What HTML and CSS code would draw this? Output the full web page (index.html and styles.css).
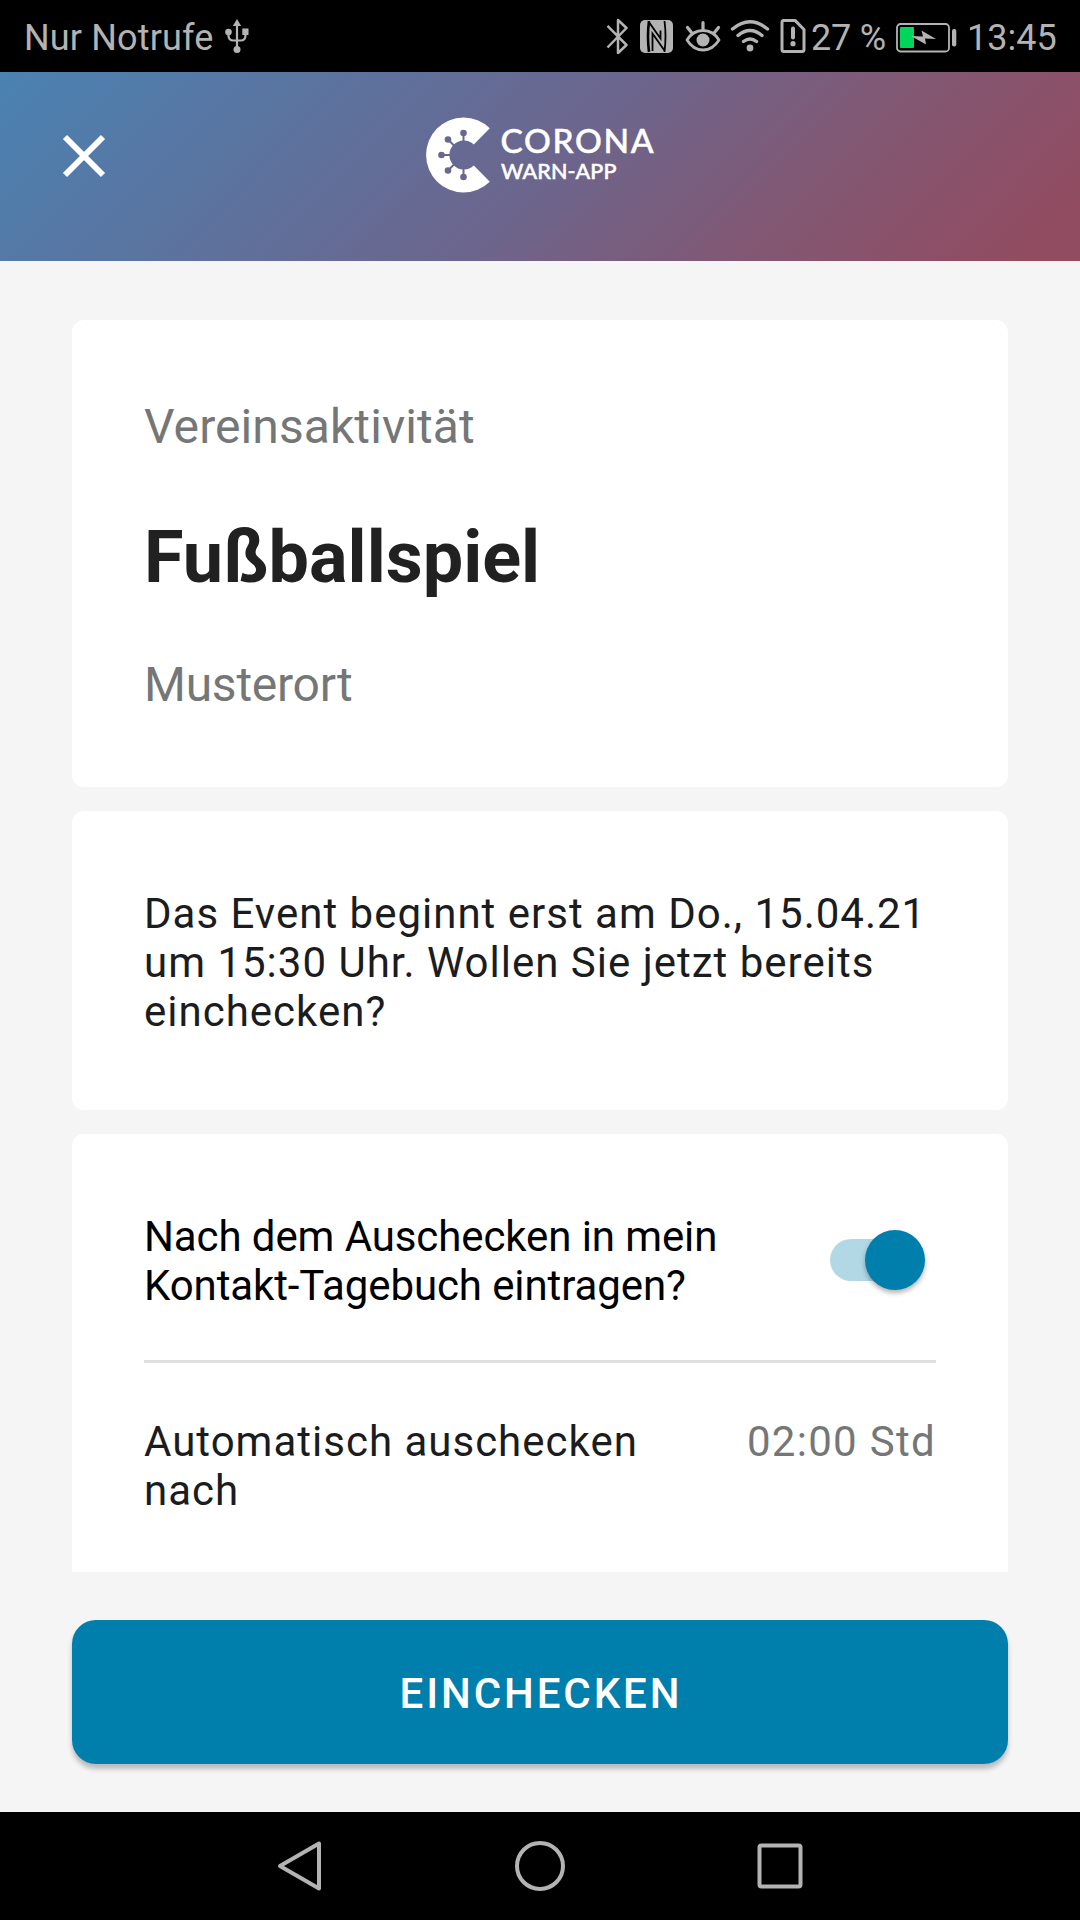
FILE: index.html
```html
<!DOCTYPE html>
<html lang="de">
<head>
<meta charset="utf-8">
<title>Corona-Warn-App</title>
<link rel="stylesheet" href="styles.css">
</head>
<body>
<div class="screen">
  <div class="status">
    <span class="carrier">Nur Notrufe</span>
    <svg class="usb" width="24" height="36" viewBox="0 0 24 36" fill="#b3b3b3">
      <path d="M12 1l4.200 7h-8.400z"/>
      <path d="M12 6v26M3.500 13v4.500c0 3 2 5 5 5h7c3 0 5-2 5-5V13" fill="none" stroke="#b3b3b3" stroke-width="2.200"/>
      <circle cx="3.500" cy="14" r="3.300"/><rect x="17.300" y="10.500" width="6.200" height="6.500"/><circle cx="12" cy="31.500" r="3.500"/>
    </svg>
    <div class="icons">
      <svg class="bluetooth" width="24" height="36" viewBox="0 0 24 36" fill="none" stroke="#b3b3b3" stroke-width="2.500" stroke-linejoin="round">
        <path d="M1.500 7.800L20.500 27l-8.500 8V2l8.500 8L1.500 29.500"/>
      </svg>
      <svg class="nfc" width="33" height="36" viewBox="0 0 33 36">
        <rect y="2" width="33" height="33" rx="5" fill="#b3b3b3"/>
        <g fill="none" stroke="#000" stroke-width="1.800">
          <path d="M9 3Q7 18 9 34" stroke-width="2.600"/>
          <path d="M24.500 3Q26.500 18 24.500 34"/>
          <path d="M8.500 3.500L20.500 20.500V12.500M12.500 33V15.500L24.500 32.500"/>
        </g>
      </svg>
      <svg class="eye" width="36" height="36" viewBox="0 0 36 36">
        <g fill="none" stroke="#b3b3b3" stroke-width="3.200" stroke-linecap="round">
          <path d="M2 22c4-6.500 10-9.500 16-9.500S30 15.500 34 22c-4 6.500-10 10-16 10S6 28.500 2 22z" stroke-width="2.800" stroke-linejoin="round"/>
          <path d="M18 4.500v7M2.500 9.500l4 5M33.500 9.500l-4 5"/>
        </g>
        <circle cx="18" cy="22" r="6.500" fill="#b3b3b3"/>
      </svg>
      <svg class="wifi" width="40" height="36" viewBox="0 0 40 36">
        <g fill="none" stroke="#b3b3b3" stroke-width="3.400" stroke-linecap="round">
          <path d="M2.500 11Q20-3.500 37.500 11M8 17.500q12-10 24 0M13.500 23.500q6.500-5 13 0"/>
        </g>
        <circle cx="20" cy="30" r="3.400" fill="#b3b3b3"/>
      </svg>
      <svg class="sim" width="26" height="36" viewBox="0 0 26 36">
        <path d="M3.500 2.400H15L24 11.500V31.500q0 2-2 2H4q-2 0-2-2V4.400q0-2 1.500-2z" fill="none" stroke="#b3b3b3" stroke-width="3" stroke-linejoin="round"/>
        <path d="M13 10.500v9" stroke="#b3b3b3" stroke-width="4" stroke-linecap="round"/>
        <circle cx="13" cy="25.700" r="2.600" fill="#b3b3b3"/>
      </svg>
      <span class="percent">27 %</span>
      <svg class="battery" width="61" height="30" viewBox="0 0 61 30">
        <rect x="1" y="1" width="52" height="27.500" rx="3.500" fill="none" stroke="#b3b3b3" stroke-width="1.800"/>
        <rect x="4" y="4" width="14" height="21" rx="1" fill="#00d75a"/>
        <path d="M15 13l12 .5-1.500-6L40 16l-11-.5 1 6z" fill="#b3b3b3"/>
        <rect x="56" y="6" width="4.300" height="17.500" rx="2" fill="#b3b3b3"/>
      </svg>
      <span class="time">13:45</span>
    </div>
  </div>

  <div class="header">
    <svg class="close" width="44" height="44" viewBox="0 0 44 44">
      <path d="M3 3l38 38M41 3L3 41" stroke="#fff" stroke-width="6"/>
    </svg>
    <svg class="logo" width="232" height="80" viewBox="0 0 232 80" fill="#fff">
      <path d="M63.800 13.200A37.500 37.500 0 1 0 63.800 66.800L47.800 50.600A14.500 14.500 0 1 1 47.800 29.400Z"/>
      <g fill="none" stroke="#6b668e" stroke-width="2">
        <path d="M37.500 29V19M37.500 51V61M26 40H16M29.500 32L22 24.500M29.500 48L22 55.500"/>
      </g>
      <g fill="#6a678f">
        <circle cx="37.500" cy="18" r="3.300"/><circle cx="22" cy="24.500" r="3.300"/><circle cx="15.500" cy="40" r="3.300"/><circle cx="22" cy="55.500" r="3.300"/><circle cx="37.500" cy="62" r="3.300"/>
      </g>
      <text class="word-main" x="74.500" y="38" textLength="153" lengthAdjust="spacing">CORONA</text>
      <text class="word-sub" x="75" y="64.200" textLength="115.500" lengthAdjust="spacing">WARN-APP</text>
    </svg>
  </div>

  <div class="content">
    <div class="card">
      <div class="muted activity">Vereinsaktivität</div>
      <h1 class="title">Fußballspiel</h1>
      <div class="muted place">Musterort</div>
    </div>
    <div class="card note">
      <p class="text wide">Das Event beginnt erst am Do., 15.04.21<br>um 15:30 Uhr. Wollen Sie jetzt bereits<br>einchecken?</p>
    </div>
    <div class="card settings">
      <div class="row diary">
        <p class="text dark">Nach dem Auschecken in mein<br>Kontakt-Tagebuch eintragen?</p>
        <div class="switch"><div class="thumb"></div></div>
      </div>
      <div class="row">
        <p class="text wide">Automatisch auschecken<br>nach</p>
        <p class="text duration">02:00 Std</p>
      </div>
    </div>
  </div>

  <div class="footer"><button class="button" type="button">EINCHECKEN</button></div>

  <div class="nav">
    <svg width="48" height="54" viewBox="0 0 48 54"><path d="M43 4.500V49.500L4 27Z"/></svg>
    <svg width="52" height="54" viewBox="0 0 52 54"><circle cx="26" cy="27" r="23"/></svg>
    <svg width="48" height="54" viewBox="0 0 48 54"><rect x="3.500" y="6.500" width="41" height="41" rx="2"/></svg>
  </div>
</div>
</body>
</html>
```
FILE: styles.css
```css
* { box-sizing: border-box; }

body {
  margin: 0;
  font-family: Roboto, sans-serif;
}

.screen {
  display: flex;
  flex-direction: column;
  width: 1080px;
  height: 1920px;
  overflow: hidden;
  background: #f5f5f5;
}

.status {
  display: flex;
  flex: none;
  height: 72px;
  padding: 0 23px 0 24px;
  background: #000;
  color: #b3b3b3;
  font-size: 36px;
  line-height: 42px;
}

.status span { padding-top: 17px; white-space: nowrap; }
.status svg { display: block; flex: none; margin-top: 18px; }
.carrier { width: 201px; letter-spacing: .15px; }
.icons { display: flex; margin-left: auto; }
.nfc { margin-left: 10px; }
.eye { margin-left: 12px; }
.wifi { margin-left: 9px; }
.sim { margin-left: 10px; }
.percent { margin-left: 5px; width: 75px; letter-spacing: -.2px; }
.status .battery { margin-top: 23px; margin-left: 10px; }
.time { width: 90px; margin-left: 10px; }

.header {
  display: flex;
  flex: none;
  align-items: flex-start;
  height: 189px;
  padding: 42px 62px 0;
  background: linear-gradient(135deg, #4a82b2 0%, #6b668e 50%, #835772 74%, #914c61 95%);
}

.close { margin-top: 20px; display: block; }
.logo { margin: 1px 0 0 320px; display: block; }

.word-main, .word-sub {
  font-family: Lato, sans-serif;
  font-weight: 500;
  stroke: #fff;
  stroke-width: .5px;
}
.word-main { font-size: 33.5px; }
.word-sub { font-size: 21.5px; }

.content {
  display: flex;
  flex: none;
  flex-direction: column;
  gap: 24px;
  height: 1311px;
  padding: 59px 72px 0;
  overflow: hidden;
}

.card {
  flex: none;
  height: 467px;
  padding: 79px 72px 0;
  border-radius: 12px;
  background: #fff;
}

.note { height: 299px; padding-top: 78px; }
.settings { height: 460px; padding-top: 78px; }

.muted {
  color: #757776;
  font-size: 48px;
  line-height: 56px;
}

.activity { letter-spacing: .08px; }
.place { letter-spacing: -.25px; }

.title {
  margin: 61px 0 57px;
  color: #212121;
  font-size: 72px;
  font-weight: 700;
  line-height: 84px;
}

.text {
  margin: 0;
  color: #1b1c1d;
  font-size: 42px;
  line-height: 49px;
  white-space: nowrap;
}

.dark { color: #000; letter-spacing: -.1px; }
.wide { letter-spacing: 1px; }
.duration { color: #757776; letter-spacing: 1.3px; }

.row { display: flex; justify-content: space-between; }

.diary {
  height: 151px;
  margin-bottom: 54px;
  border-bottom: 3px solid #dedfdf;
}

.switch {
  display: flex;
  align-items: center;
  justify-content: flex-end;
  width: 84px;
  height: 42px;
  margin: 27px 22px 0 0;
  border-radius: 21px;
  background: #b2d8e6;
}

.thumb {
  flex: none;
  width: 60px;
  height: 60px;
  margin-right: -11px;
  border-radius: 50%;
  background: #007fad;
  box-shadow: 0 3px 5px rgba(0, 0, 0, .3);
}

.footer { flex: none; height: 240px; padding: 48px 72px; }

.button {
  display: block;
  width: 936px;
  height: 144px;
  padding: 2px 0 0;
  border: 0;
  border-radius: 24px;
  background: #007fad;
  box-shadow: 0 5px 5px rgba(0, 0, 0, .24);
  color: #fff;
  font-family: Roboto, sans-serif;
  font-size: 42px;
  font-weight: 500;
  letter-spacing: 2.9px;
  text-indent: 2px;
}

.nav {
  display: flex;
  flex: none;
  justify-content: space-between;
  height: 108px;
  padding: 27px 276px 0;
  background: #000;
}

.nav svg { fill: none; stroke: #b3b3b3; stroke-width: 4; stroke-linejoin: round; }
```
